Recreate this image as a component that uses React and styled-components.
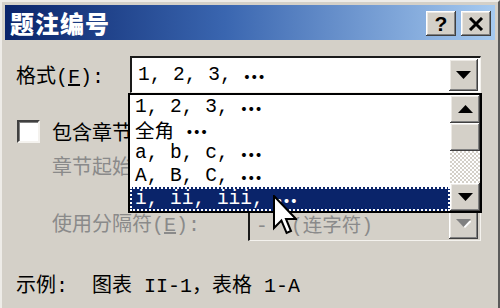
import React from "react";
import styled, { createGlobalStyle } from "styled-components";

const FACE = "#d4d0c8";
const MONO = `"Liberation Mono", "Noto Sans CJK SC", monospace`;
const CJK = `"Noto Sans CJK SC", "Liberation Sans", sans-serif`;
const GRAY_TEXT = "#8a8a8a";

const GlobalStyle = createGlobalStyle`
  html, body {
    margin: 0;
    padding: 0;
    background: ${FACE};
  }
  body {
    width: 500px;
    height: 308px;
    overflow: hidden;
  }
`;

const items = [
  { id: 1, text: "1, 2, 3, " },
  { id: 2, text: "全角 " },
  { id: 3, text: "a, b, c, " },
  { id: 4, text: "A, B, C, " },
  { id: 5, text: "i, ii, iii, ", selected: true },
];

const App = () => {
  return (
    <>
      <GlobalStyle />
      <Window>
        <TitleBar>
          <Title>题注编号</Title>
          <TitleButtons>
            <TitleButton>?</TitleButton>
            <TitleButton>
              <svg width="16" height="14" viewBox="0 0 16 14">
                <path d="M2 1 L14 13 M14 1 L2 13" stroke="#000" strokeWidth="3" />
              </svg>
            </TitleButton>
          </TitleButtons>
        </TitleBar>

        <Body>
          <Row $height={37}>
            <Label $width={114}>
              格式(<Key>F</Key>):
            </Label>
            <ComboWrap $width={351}>
              <Combo>
                <ComboText>
                  1, 2, 3, <Dots>…</Dots>
                </ComboText>
                <DropButton>
                  <Arrow />
                </DropButton>
              </Combo>

              {/* the open list of the format combo */}
              <DropList>
                <ItemList>
                  {items.map((item) => (
                    <Item key={item.id} $selected={item.selected}>
                      {item.text}
                      <Dots>…</Dots>
                    </Item>
                  ))}
                </ItemList>
                <ScrollBar>
                  <ScrollButton>
                    <Arrow up />
                  </ScrollButton>
                  <Thumb />
                  <Track />
                  <ScrollButton>
                    <Arrow />
                  </ScrollButton>
                </ScrollBar>
              </DropList>
            </ComboWrap>
          </Row>

          <Row $height={23} $top={27}>
            <CheckBox />
            <Label $gap={12} $width={76}>
              包含章节号(<Key>N</Key>)
            </Label>
          </Row>

          <Row $height={37} $top={4} $indent={36}>
            <Label $width={76} $disabled>
              章节起始样式(<Key>P</Key>):
            </Label>
          </Row>

          <Row $height={37} $top={20} $indent={36}>
            <Label $width={196} $disabled>
              使用分隔符(<Key>E</Key>):
            </Label>
            <Combo $width={233} $disabled>
              <ComboText $disabled>-  (连字符)</ComboText>
              <DropButton>
                <Arrow disabled />
              </DropButton>
            </Combo>
          </Row>

          <Row $height={24} $top={30}>
            <Label>示例:  图表 II-1，表格 1-A</Label>
          </Row>
        </Body>

        <Cursor width="24" height="40" viewBox="0 0 12 20">
          <path
            d="M0.5 0.5 L0.5 16.5 L4.2 12.8 L6.8 19 L9 18 L6.5 12 L11.5 12 Z"
            fill="#fff"
            stroke="#000"
            strokeWidth="1"
            strokeLinejoin="miter"
          />
        </Cursor>
      </Window>
    </>
  );
};

const Arrow = ({ up, disabled }) => (
  <svg width="15" height="9" viewBox="0 0 15 9">
    {disabled && <polygon points="2,2 16,2 9,9" fill="#fff" />}
    <polygon
      points={up ? "0,8 15,8 7.5,0" : "0,0 15,0 7.5,8"}
      fill={disabled ? "#808080" : "#000"}
    />
  </svg>
);

const Window = styled.div`
  position: relative;
  width: 500px;
  height: 308px;
  box-sizing: border-box;
  padding: 3px 3px 0 3px;
  background: ${FACE};
  border-top: 2px solid #eeece8;
  border-left: 2px solid #eeece8;
  border-right: 2px solid #5a5a5a;
  overflow: hidden;
`;

const TitleBar = styled.div`
  display: flex;
  align-items: center;
  height: 35px;
  padding: 0 4px 0 5px;
  background: linear-gradient(to right, #0a246a 0%, #3a66b0 45%, #a6caf0 100%);
`;

const Title = styled.div`
  flex: 1;
  color: #fff;
  font-family: ${CJK};
  font-weight: 900;
  font-size: 24px;
  letter-spacing: 1px;
  line-height: 1;
`;

const TitleButtons = styled.div`
  display: flex;
  gap: 5px;
  margin-top: 2px;
`;

const raised = `
  background: ${FACE};
  box-shadow: inset -1px -1px #404040, inset 1px 1px #ffffff,
    inset -2px -2px #808080, inset 2px 2px #ece9e4;
`;

const TitleButton = styled.div`
  ${raised}
  width: 30px;
  height: 25px;
  display: flex;
  align-items: center;
  justify-content: center;
  font-family: "Liberation Sans", sans-serif;
  font-weight: 700;
  font-size: 21px;
  color: #000;
`;

const Body = styled.div`
  display: flex;
  flex-direction: column;
  padding: 16px 14px 0 11px;
`;

const Row = styled.div`
  display: flex;
  align-items: center;
  height: ${(p) => p.$height}px;
  margin-top: ${(p) => p.$top || 0}px;
  padding-left: ${(p) => p.$indent || 0}px;
`;

const Label = styled.div`
  width: ${(p) => (p.$width ? `${p.$width}px` : "auto")};
  margin-left: ${(p) => p.$gap || 0}px;
  flex-shrink: 0;
  overflow: hidden;
  font-family: ${MONO};
  font-size: 20px;
  color: ${(p) => (p.$disabled ? GRAY_TEXT : "#000")};
  white-space: pre;
`;

const Key = styled.span`
  text-decoration: underline;
`;

const ComboWrap = styled.div`
  position: relative;
  width: ${(p) => p.$width}px;
  height: 100%;
`;

const Combo = styled.div`
  display: flex;
  width: ${(p) => (p.$width ? `${p.$width}px` : "100%")};
  height: 37px;
  box-sizing: border-box;
  border-style: solid;
  border-width: 2px 1px 1px 2px;
  border-color: #1a1a1a #f4f2ee #f4f2ee #1a1a1a;
  background: ${(p) => (p.$disabled ? FACE : "#fff")};
`;

const ComboText = styled.div`
  flex: 1;
  display: flex;
  align-items: center;
  padding-left: 6px;
  font-family: ${MONO};
  font-size: 19.5px;
  color: ${(p) => (p.$disabled ? GRAY_TEXT : "#000")};
  white-space: pre;
`;

const DropButton = styled.div`
  ${raised}
  width: 29px;
  margin: 1px 2px 1px 0;
  display: flex;
  align-items: center;
  justify-content: center;
`;

const Dots = styled.span`
  font-family: ${CJK};
  font-weight: 900;
  font-size: 22px;
  line-height: 1;
`;

const DropList = styled.div`
  position: absolute;
  top: 100%;
  left: -2px;
  z-index: 2;
  width: 354px;
  height: 120px;
  box-sizing: border-box;
  display: flex;
  border: 2px solid #000;
  background: #fff;
`;

const ItemList = styled.div`
  flex: 1;
  display: flex;
  flex-direction: column;
`;

const Item = styled.div`
  display: flex;
  align-items: center;
  height: 23px;
  box-sizing: border-box;
  padding-left: ${(p) => (p.$selected ? 3 : 5)}px;
  font-family: ${MONO};
  font-size: 19.5px;
  white-space: pre;
  color: ${(p) => (p.$selected ? "#fff" : "#000")};
  background: ${(p) => (p.$selected ? "#0a246a" : "transparent")};
  border: ${(p) => (p.$selected ? "2px dotted #fff" : "none")};
  &:last-child {
    flex: 1;
  }
`;

const ScrollBar = styled.div`
  width: 30px;
  display: flex;
  flex-direction: column;
`;

const ScrollButton = styled.div`
  ${raised}
  height: 28px;
  display: flex;
  align-items: center;
  justify-content: center;
`;

const Thumb = styled.div`
  ${raised}
  height: 28px;
`;

const Track = styled.div`
  flex: 1;
  background: repeating-conic-gradient(${FACE} 0 25%, #ffffff 0 50%) 0 0 / 4px 4px;
`;

const CheckBox = styled.div`
  width: 23px;
  height: 23px;
  margin-left: 1px;
  box-sizing: border-box;
  background: #fff;
  border-style: solid;
  border-width: 2px;
  border-color: #404040 #f4f2ee #f4f2ee #404040;
  box-shadow: inset 1px 1px #808080;
`;

const Cursor = styled.svg`
  position: absolute;
  left: 271px;
  top: 193px;
  z-index: 3;
`;

export default App;
